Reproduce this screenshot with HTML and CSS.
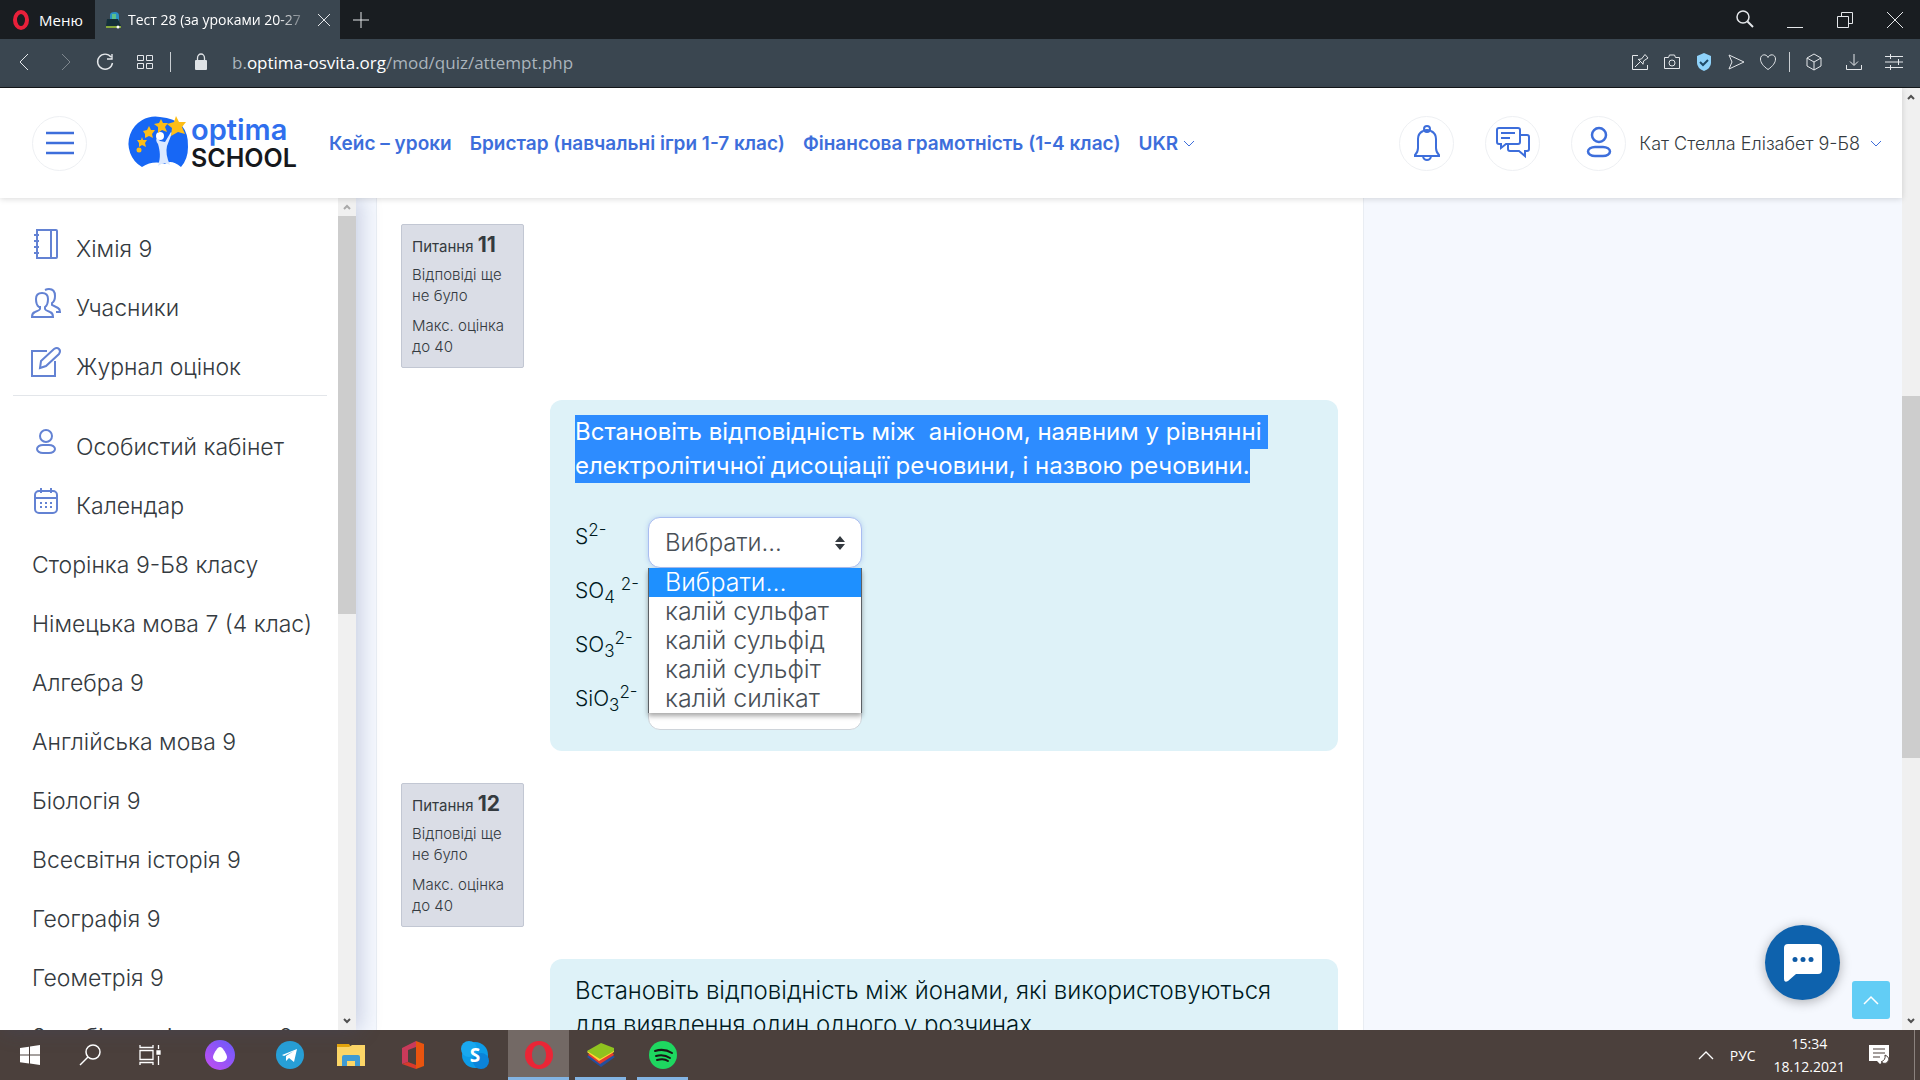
FILE: index.html
```html
<!DOCTYPE html>
<html lang="uk">
<head>
    <meta charset="UTF-8">
    <meta name="viewport" content="width=device-width, initial-scale=1.0">
    <title>Тест 28 (за уроками 20-27)</title>
    <link rel="stylesheet" href="styles.css">
</head>
<body>
    <!-- Browser tabs -->
    <div class="tabbar">
        <button class="menu-btn">
            <svg width="20" height="20" viewBox="0 0 20 20"><ellipse cx="10" cy="10" rx="6" ry="8" fill="none" stroke="#e8203a" stroke-width="4"/></svg>
            Меню
        </button>
        <div class="tab">
            <svg width="17" height="18" viewBox="0 0 17 18"><path d="M5 8V4q0-3 5-3 4 0 4 4v5H6z" fill="#2a8fc4"/><path d="M7 3h4v5H7z" fill="#5cc08a"/><path d="M2 8h11l3 7H1z" fill="#15303a"/><path d="M1 15h15v2H1z" fill="#87a93c"/><circle cx="13" cy="16" r="1.5" fill="#fff"/></svg>
            <span class="tab-title">Тест 28 (за уроками 20-27</span>
            <button class="icon-btn" aria-label="Закрити вкладку"><svg width="14" height="14" viewBox="0 0 14 14"><path d="M1 1l12 12M13 1L1 13"/></svg></button>
        </div>
        <button class="icon-btn new-tab" aria-label="Нова вкладка"><svg width="16" height="16" viewBox="0 0 16 16"><path d="M8 0v16M0 8h16"/></svg></button>
        <div class="window-btns">
            <button class="icon-btn" aria-label="Пошук"><svg width="20" height="20" viewBox="0 0 20 20"><circle cx="8" cy="7" r="6" stroke-width="1.500"/><path d="M12.500 11.500L18 17" stroke-width="2"/></svg></button>
            <button class="icon-btn" aria-label="Згорнути"><svg width="20" height="20" viewBox="0 0 20 20"><path d="M2 17.500h16"/></svg></button>
            <button class="icon-btn" aria-label="Розгорнути"><svg width="20" height="20" viewBox="0 0 20 20"><path d="M2.500 6.500h11v11h-11zM6.500 6V2.500h11v11H14"/></svg></button>
            <button class="icon-btn" aria-label="Закрити"><svg width="20" height="20" viewBox="0 0 20 20"><path d="M2 2l16 16M18 2L2 18"/></svg></button>
        </div>
    </div>

    <!-- Address bar -->
    <div class="toolbar">
        <div class="tool-left">
            <button class="icon-btn" aria-label="Назад"><svg width="20" height="20" viewBox="0 0 20 20"><path d="M13 2L5 10l8 8"/></svg></button>
            <button class="icon-btn dim" aria-label="Вперед"><svg width="20" height="20" viewBox="0 0 20 20"><path d="M7 2l8 8-8 8"/></svg></button>
            <button class="icon-btn" aria-label="Оновити"><svg width="20" height="20" viewBox="0 0 20 20"><path d="M16 5a7.500 7.500 0 1 0 1.500 6M17 2v5h-5" stroke-width="1.400"/></svg></button>
            <button class="icon-btn" aria-label="Експрес-панель"><svg width="20" height="20" viewBox="0 0 20 20"><path d="M2.500 3.500h6v5h-6zM11.500 3.500h6v5h-6zM2.500 11.500h6v5h-6zM11.500 11.500h6v5h-6z"/></svg></button>
        </div>
        <span class="sep"></span>
        <svg class="lock" width="14" height="18" viewBox="0 0 14 18"><path d="M3.500 8V5a3.500 4 0 0 1 7 0v3" fill="none" stroke="#dfe3e6" stroke-width="1.300"/><rect x="1" y="7" width="12" height="10" rx="1" fill="#dfe3e6"/></svg>
        <div class="url">b.<b>optima-osvita.org</b>/mod/quiz/attempt.php</div>
        <div class="tool-right">
            <button class="icon-btn" aria-label="Закріпити"><svg width="18" height="18" viewBox="0 0 18 18"><path d="M7 2.500H1.500v14h15V12M4 14l5-5M7 6l5 5M7 6.500l3.500-.5L14 1.500 17 5l-4.500 3-.5 3.500"/></svg></button>
            <button class="icon-btn" aria-label="Знімок"><svg width="18" height="18" viewBox="0 0 18 18"><path d="M1.500 4.500h4l1-2.500h5l1 2.500h4v11h-15z"/><circle cx="9" cy="10" r="3"/></svg></button>
            <button class="icon-btn" aria-label="Захист"><svg width="18" height="18" viewBox="0 0 18 18"><path d="M9 0l7 3v7q0 5-7 8-7-3-7-8V3z" fill="#8fd3fb" stroke="none"/><path d="M5 9l3 3 5-5" stroke="#1f4a66" stroke-width="2"/></svg></button>
            <button class="icon-btn" aria-label="Надіслати"><svg width="18" height="18" viewBox="0 0 18 18"><path d="M2 2l15 7-15 7 3-7z"/></svg></button>
            <button class="icon-btn" aria-label="Закладка"><svg width="18" height="18" viewBox="0 0 18 18"><path d="M9 16.500C4 13 1.500 9.500 1.500 6c0-5 6-5.500 7.500-1.500C10.500.500 16.500 1 16.500 6c0 3.500-2.500 7-7.500 10.500z"/></svg></button>
        </div>
        <span class="sep"></span>
        <div class="tool-end">
            <button class="icon-btn" aria-label="Розширення"><svg width="18" height="18" viewBox="0 0 18 18"><path d="M9 1l7 4v8l-7 4-7-4V5zM2 5l7 4 7-4M9 9v8"/></svg></button>
            <button class="icon-btn" aria-label="Завантаження"><svg width="18" height="18" viewBox="0 0 18 18"><path d="M9 1v11M5 8.500l4 4 4-4M1.500 12v4.500h15V12"/></svg></button>
            <button class="icon-btn" aria-label="Налаштування"><svg width="18" height="18" viewBox="0 0 18 18"><path d="M0 3.500h18M0 9h18M0 14.500h18M5.500 1v5M13.500 6v6M5.500 12v5"/></svg></button>
        </div>
    </div>

    <div class="page">
        <div class="site">
            <header class="header">
                <button class="round-btn" aria-label="Меню сайту"><svg width="28" height="24" viewBox="0 0 28 24" stroke-width="2.500"><path d="M0 2h28M0 12h28M0 22h28"/></svg></button>
                <a class="logo" href="#" aria-label="Optima School">
                    <svg width="168" height="54" viewBox="0 0 168 54">
                        <path d="M9 51A27 27 0 0 1 27 1q29 2 28 30 0 12-7 20-10-8-16-3Q20 44 9 51z" fill="#1767f5"/>
                        <path d="M25 50c3-9 2-15 0-22q-3-4-1-6l3 3 5 1 6-10 1 1-5 13q-2 8 3 19-6-4-12 1z" fill="#dce9ff"/><circle cx="27" cy="20" r="4" fill="#fff"/>
                        <g fill="#fdbd17"><path d="M43 0l3 6 7 0-4 5 3 7-7-2-7 4 1-8-5-4 7-2z"/><path d="M28 3l2 4 5 0-3 4 2 5-5-2-4 3 0-6-4-3 5-1z"/><path d="M16 10l2 4 4 0-3 4 1 4-4-2-4 2 0-4-2-3 4-1z"/><path d="M9 21l1 3 4 0-2 3 1 4-4-2-3 2 0-4-2-3 4 0z"/><circle cx="6" cy="34" r="2.500"/></g>
                        <text x="58" y="24" class="logo-top">optima</text>
                        <text x="58" y="51" class="logo-bottom">SCHOOL</text>
                    </svg>
                </a>
                <nav class="nav">
                    <a href="#">Кейс – уроки</a>
                    <a href="#">Бристар (навчальні ігри 1-7 клас)</a>
                    <a href="#">Фінансова грамотність (1-4 клас)</a>
                    <a href="#">UKR <svg width="12" height="7" viewBox="0 0 12 7"><path d="M1 1l5 5 5-5"/></svg></a>
                </nav>
                <div class="user-tools">
                    <button class="round-btn" aria-label="Сповіщення"><svg width="28" height="36" viewBox="0 0 28 36" stroke-width="2"><path d="M10 6a9 9 0 0 0-5 8v9q0 4-3 7v1h24v-1q-3-3-3-7v-9a9 9 0 0 0-5-8M10 32q1 3 4 3t4-3"/><circle cx="14" cy="4" r="3"/><path d="M10 6q4-2 8 0"/></svg></button>
                    <button class="round-btn" aria-label="Повідомлення"><svg width="34" height="34" viewBox="0 0 34 34" stroke-width="2"><path d="M3 2h19q2 0 2 2v12q0 2-2 2H10l-5 4v-4H3q-2 0-2-2V4q0-2 2-2zM5 7h14M5 12h9M24 9h7q2 0 2 2v12q0 2-2 2h-2v5l-6-5H14q-2 0-2-2v-5"/></svg></button>
                    <button class="round-btn" aria-label="Профіль"><svg width="26" height="32" viewBox="0 0 26 32" stroke-width="2.500"><ellipse cx="13" cy="8" rx="7" ry="7"/><rect x="2" y="20" width="22" height="9" rx="7"/></svg></button>
                    <a class="user-name" href="#">Кат Стелла Елізабет 9-Б8 <svg width="12" height="7" viewBox="0 0 12 7"><path d="M1 1l5 5 5-5"/></svg></a>
                </div>
            </header>

            <div class="content">
                <aside class="sidebar">
                    <nav class="side-nav">
                        <a href="#"><svg width="30" height="30" viewBox="0 0 30 30"><path d="M6 1h19q1 0 1 1v26q0 1-1 1H6zM20 1v28M3 6h5M3 12h5M3 18h5M3 24h5"/></svg>Хімія 9</a>
                        <a href="#"><svg width="30" height="30" viewBox="0 0 30 30"><path d="M8 19q-3-2-3-8 0-6 6-6t6 6q0 6-3 8v2q0 1 5 3 3 1 3 5H1q0-4 3-5 5-2 5-3v-2zM14 2q2-1 4-1 6 0 6 7 0 5-3 7v2l6 3q2 1 2 4h-4"/></svg>Учасники</a>
                        <a href="#"><svg width="30" height="30" viewBox="0 0 30 30"><path d="M16 4H1v25h23V14M9 21l1-7L23 2q3-2 5 0t0 5L15 19z"/></svg>Журнал оцінок</a>
                        <hr>
                        <a href="#"><svg width="30" height="30" viewBox="0 0 30 30"><circle cx="15" cy="9" r="6"/><rect x="6" y="18" width="18" height="8" rx="6"/></svg>Особистий кабінет</a>
                        <a href="#"><svg width="30" height="30" viewBox="0 0 30 30"><rect x="4" y="5" width="22" height="22" rx="4"/><path d="M4 12h22M10 2v5M20 2v5"/><path d="M9 17h2M14 17h2M19 17h2M9 21h2M14 21h2M19 21h2"/></svg>Календар</a>
                        <a href="#">Сторінка 9-Б8 класу</a>
                        <a href="#">Німецька мова 7 (4 клас)</a>
                        <a href="#">Алгебра 9</a>
                        <a href="#">Англійська мова 9</a>
                        <a href="#">Біологія 9</a>
                        <a href="#">Всесвітня історія 9</a>
                        <a href="#">Географія 9</a>
                        <a href="#">Геометрія 9</a>
                        <a href="#">Зарубіжна література 9</a>
                    </nav>
                    <div class="scrollbar side-scroll">
                        <svg width="8" height="6" viewBox="0 0 8 6"><path d="M1 5l3-3 3 3"/></svg>
                        <div class="track"><div class="thumb"></div></div>
                        <svg width="8" height="6" viewBox="0 0 8 6"><path d="M1 1l3 3 3-3"/></svg>
                    </div>
                </aside>

                <main class="quiz">
                    <section class="question">
                        <div class="info">
                            <h3>Питання <span>11</span></h3>
                            <p>Відповіді ще не було</p>
                            <p>Макс. оцінка до 40</p>
                        </div>
                        <div class="formulation">
                            <p class="qtext"><mark>Встановіть відповідність між&nbsp; аніоном, наявним у рівнянні&nbsp;</mark><mark>електролітичної дисоціації речовини, і назвою речовини.</mark></p>
                            <table class="answers">
                                <tr>
                                    <td class="text"><label for="a1">S<sup>2-</sup></label></td>
                                    <td class="control">
                                        <select id="a1" class="active"><option>Вибрати...</option></select>
                                        <ul class="options">
                                            <li class="selected">Вибрати...</li>
                                            <li>калій сульфат</li>
                                            <li>калій сульфід</li>
                                            <li>калій сульфіт</li>
                                            <li>калій силікат</li>
                                        </ul>
                                    </td>
                                </tr>
                                <tr>
                                    <td class="text"><label for="a2">SO<sub>4</sub> <sup>2-</sup></label></td>
                                    <td class="control"><select id="a2"><option></option></select></td>
                                </tr>
                                <tr>
                                    <td class="text"><label for="a3">SO<sub>3</sub><sup>2-</sup></label></td>
                                    <td class="control"><select id="a3"><option></option></select></td>
                                </tr>
                                <tr>
                                    <td class="text"><label for="a4">SiO<sub>3</sub><sup>2-</sup></label></td>
                                    <td class="control"><select id="a4"><option></option></select></td>
                                </tr>
                            </table>
                        </div>
                    </section>

                    <section class="question">
                        <div class="info">
                            <h3>Питання <span>12</span></h3>
                            <p>Відповіді ще не було</p>
                            <p>Макс. оцінка до 40</p>
                        </div>
                        <div class="formulation">
                            <p class="qtext">Встановіть відповідність між йонами, які використовуються для виявлення один одного у розчинах.</p>
                        </div>
                    </section>
                </main>
                <div class="blocks"></div>
            </div>

            <button class="chat-btn" aria-label="Чат"><svg width="38" height="38" viewBox="0 0 38 38"><path d="M4 0h30q4 0 4 4v22q0 4-4 4H12l-8 7q-4 2-4-2V4q0-4 4-4z" fill="#fff"/><g fill="#0e5ba6"><circle cx="11" cy="15.500" r="2.500"/><circle cx="19" cy="15.500" r="2.500"/><circle cx="27" cy="15.500" r="2.500"/></g></svg></button>
            <button class="top-btn" aria-label="Вгору"><svg width="16" height="9" viewBox="0 0 16 9"><path d="M1 8l7-7 7 7" fill="none" stroke="#fff" stroke-width="1.500"/></svg></button>
        </div>
        <div class="scrollbar page-scroll">
            <svg width="8" height="6" viewBox="0 0 8 6"><path d="M1 5l3-3 3 3"/></svg>
            <div class="track"><div class="thumb"></div></div>
            <svg width="8" height="6" viewBox="0 0 8 6"><path d="M1 1l3 3 3-3"/></svg>
        </div>
    </div>

    <!-- Windows taskbar -->
    <footer class="taskbar">
        <button aria-label="Пуск"><svg width="20" height="20" viewBox="0 0 20 20" fill="#fff"><path d="M0 3l9-1.300V9.500H0zM10 1.500L20 0v9.500H10zM0 10.500h9v8L0 17.200zM10 10.500h10V20l-10-1.500z"/></svg></button>
        <button aria-label="Пошук"><svg width="22" height="22" viewBox="0 0 22 22" fill="none" stroke="#fff" stroke-width="1.500"><circle cx="14" cy="8" r="7"/><path d="M9 13l-8 8"/></svg></button>
        <button aria-label="Подання завдань"><svg width="22" height="20" viewBox="0 0 22 20" fill="none" stroke="#fff" stroke-width="1.300"><path d="M1 5.500h13v9H1zM1 0v2.500h13V0M1 20v-2.500h13V20M19.500 0v4M19.500 11v9"/><path d="M18 6h3v3h-3z" fill="#fff"/></svg></button>
        <button class="wide" aria-label="Аліса"><svg width="30" height="30" viewBox="0 0 30 30"><defs><linearGradient id="al" x1="0" y1="1" x2="1" y2="0"><stop offset="0" stop-color="#c44df0"/><stop offset="1" stop-color="#6a5cff"/></linearGradient></defs><circle cx="15" cy="15" r="15" fill="url(#al)"/><path d="M15 7c3 0 7 8 7 10 0 3-3 5-7 5s-7-2-7-5c0-2 4-10 7-10z" fill="#fff"/></svg></button>
        <button aria-label="Telegram"><svg width="28" height="28" viewBox="0 0 28 28"><circle cx="14" cy="14" r="14" fill="#279fd6"/><path d="M6 14l15-6-3 13-5-4-3 3 0-5 8-5-10 5z" fill="#fff"/></svg></button>
        <button class="app" aria-label="Провідник"><svg width="28" height="24" viewBox="0 0 28 24"><path d="M0 1h12l2 3H0z" fill="#e5a50c"/><path d="M0 4h12l3-2h13v21H0z" fill="#fcd667"/><path d="M5 23v-9q0-2 2-2h14q2 0 2 2v9h-5v-5h-8v5z" fill="#3f9bd4"/></svg></button>
        <button class="app" aria-label="Office"><svg width="24" height="28" viewBox="0 0 24 28"><path d="M1 7L15 0v6L7 9v12l-6 2z" fill="#c93a5a"/><path d="M15 0l8 3v22l-8 3z" fill="#e8540f"/><path d="M1 23l6-2 8 3v4z" fill="#d83a2c"/></svg></button>
        <button class="app" aria-label="Skype"><svg width="28" height="28" viewBox="0 0 28 28"><circle cx="14" cy="14" r="13" fill="#0c9ce8"/><circle cx="8" cy="8" r="8" fill="#19a8ef"/><circle cx="20" cy="20" r="8" fill="#0b83d9"/><text x="14" y="21" class="skype-s">S</text></svg></button>
        <button class="open active" aria-label="Opera"><svg width="30" height="30" viewBox="0 0 30 30"><path fill-rule="evenodd" d="M15 1a14 14 0 1 0 0 28 14 14 0 1 0 0-28zm0 4c4 0 7 4 7 10s-3 10-7 10S8 21 8 15s3-10 7-10z" fill="#ea2536"/></svg></button>
        <button class="open" aria-label="BlueStacks"><svg width="28" height="24" viewBox="0 0 28 24"><path d="M0 14l14 10 14-10-3-2-11 8-12-8z" fill="#234f9e"/><path d="M1 12l12 9 14-9-2-3H3z" fill="#e23b2e"/><path d="M0 9l12 9 15-9V7H2z" fill="#ffd633"/><path d="M0 8L14 0l13 5v3l-14 8z" fill="#8fc31f"/></svg></button>
        <button class="open" aria-label="Spotify"><svg width="28" height="28" viewBox="0 0 28 28"><circle cx="14" cy="14" r="14" fill="#1ed760"/><path d="M6 10q9-3 17 2M7 15q8-2 14 2M8 19q7-2 11 1" fill="none" stroke="#191414" stroke-width="2" stroke-linecap="round"/></svg></button>
        <div class="tray">
            <svg width="16" height="9" viewBox="0 0 16 9" fill="none" stroke="#fff" stroke-width="1.300"><path d="M1 8l7-7 7 7"/></svg>
            <span class="lang">РУС</span>
            <div class="clock"><span>15:34</span><span>18.12.2021</span></div>
            <svg class="notes" width="20" height="20" viewBox="0 0 20 20"><path d="M0 0h20v16h-5l-4 3-3-3H0z" fill="#fff"/><path d="M4 4h12M4 8h12M4 12h7" stroke="#4a3f3b" stroke-width="1.200"/><path d="M16 10q1 5-4 7 6 4 8-3-1-3-4-4z" fill="#fff" stroke="#4a3f3b"/></svg>
            <span class="peek"></span>
        </div>
    </footer>
</body>
</html>
```
FILE: styles.css
```css
* {
    box-sizing: border-box;
}
body {
    margin: 0;
    height: 100vh;
    display: flex;
    flex-direction: column;
    overflow: hidden;
    font-family: Inter, "Open Sans", sans-serif;
    font-weight: 300;
    color: #343a40;
}
button {
    font: inherit;
    color: inherit;
    background: none;
    border: none;
    padding: 0;
    cursor: pointer;
}
a {
    color: inherit;
    text-decoration: none;
}
svg {
    display: block;
    flex: none;
    overflow: visible;
}

/* browser */
.tabbar, .toolbar, .taskbar {
    flex: none;
    display: flex;
    align-items: center;
    font-family: "Open Sans", "Noto Sans", sans-serif;
    font-weight: 400;
}
.tabbar {
    height: 39px;
    background: #191d21;
    color: #fff;
    font-size: 15px;
}
.menu-btn {
    display: flex;
    align-items: center;
    gap: 8px;
    width: 95px;
    padding-left: 11px;
}
.tab {
    display: flex;
    align-items: center;
    gap: 6px;
    width: 245px;
    height: 39px;
    padding: 0 9px 0 10px;
    background: #3a4650;
    font-size: 14px;
}
.tab-title {
    flex: 1;
    overflow: hidden;
    white-space: nowrap;
    mask-image: linear-gradient(to right, #000 82%, transparent);
}
.icon-btn svg {
    fill: none;
    stroke: #e4e7ea;
    stroke-width: 1;
}
.new-tab {
    margin-left: 13px;
}
.window-btns {
    display: flex;
    gap: 30px;
    margin-left: auto;
    padding-right: 15px;
}
.toolbar {
    height: 49px;
    background: #3a4650;
    border-bottom: 1px solid #14181b;
    padding: 0 17px 2px 15px;
}
.tool-left {
    display: flex;
    gap: 20px;
}
.dim {
    opacity: 0.4;
}
.sep {
    width: 1px;
    height: 20px;
    margin: 0 15px;
    background: #c9ced2;
}
.lock {
    margin: 0 24px 0 8px;
}
.url {
    flex: 1;
    font-size: 17px;
    color: #aab4bc;
}
.url b {
    font-weight: 400;
    color: #fff;
}
.tool-right {
    display: flex;
    gap: 14px;
}
.tool-right + .sep {
    margin: 0 15px 0 12px;
}
.tool-end {
    display: flex;
    gap: 22px;
}

/* scrollbars */
.page {
    flex: 1;
    min-height: 0;
    display: flex;
}
.scrollbar {
    flex: none;
    width: 18px;
    padding: 6px 0;
    display: flex;
    flex-direction: column;
    align-items: center;
    background: #f0f0f0;
}
.scrollbar svg {
    fill: none;
    stroke: #505050;
    stroke-width: 2;
}
.track {
    flex: 1;
    width: 100%;
    margin: 6px 0;
}
.thumb {
    background: #cdcdcd;
}
.side-scroll .thumb {
    height: 50%;
}
.side-scroll svg:first-child {
    stroke: #a9a9a9;
}
.page-scroll .thumb {
    height: 40%;
    margin-top: 290px;
}

/* header */
.site {
    position: relative;
    flex: 1;
    min-width: 0;
    display: flex;
    flex-direction: column;
    background: #f5f8fe;
}
.header {
    z-index: 2;
    flex: none;
    height: 110px;
    display: flex;
    align-items: center;
    padding: 0 20px 0 32px;
    background: #fff;
    box-shadow: 0 1px 6px rgba(0,0,0,0.15);
}
.round-btn {
    width: 55px;
    height: 55px;
    display: flex;
    align-items: center;
    justify-content: center;
    border: 1px solid #eef0f3;
    border-radius: 50%;
}
.header svg {
    fill: none;
    stroke: #3d6edb;
}
.header .logo svg {
    stroke: none;
}
.logo {
    margin: 0 28px 0 46px;
}
.logo-top, .logo-bottom {
    font-family: Inter, sans-serif;
    font-weight: 600;
    font-size: 29px;
    fill: #2f6fee;
}
.logo-bottom {
    font-size: 25px;
    fill: #16181c;
}
.nav {
    display: flex;
    gap: 18px;
    font-size: 19px;
    font-weight: 600;
    color: #3d6edb;
    white-space: nowrap;
}
.nav a, .user-name {
    display: flex;
    align-items: center;
    gap: 5px;
}
.user-tools {
    display: flex;
    align-items: center;
    gap: 31px;
    margin-left: auto;
}
.user-name {
    gap: 10px;
    margin-left: -18px;
    font-size: 18px;
    white-space: nowrap;
}

/* content */
.content {
    flex: 1;
    min-height: 0;
    display: flex;
}
.sidebar {
    z-index: 1;
    flex: none;
    width: 356px;
    display: flex;
    background: #fff;
    box-shadow: 4px 0 20px rgba(60,80,140,0.25);
}
.side-nav {
    flex: 1;
    overflow: hidden;
    padding-top: 20px;
}
.side-nav a {
    display: flex;
    align-items: center;
    gap: 15px;
    height: 59px;
    padding: 2px 0 0 32px;
    font-size: 23px;
    white-space: nowrap;
}
.side-nav svg {
    margin: 0 0 10px -1px;
    fill: none;
    stroke: #6382d3;
    stroke-width: 2;
}
.side-nav hr {
    margin: 0 11px 20px 13px;
    border: none;
    border-top: 1px solid #e3e6ea;
}
.quiz {
    flex: 1;
    min-width: 0;
    overflow: hidden;
    margin-left: 20px;
    padding: 26px 25px 0 24px;
    background: #fff;
    border: 1px solid #e9edf3;
    border-width: 0 1px;
}
.blocks {
    flex: none;
    width: 538px;
}
.question {
    display: grid;
    grid-template-columns: 123px 1fr;
    gap: 32px 26px;
    margin-bottom: 32px;
}
.info {
    height: 144px;
    padding: 5px 10px;
    background: #dadde6;
    border: 1px solid #c2c7d3;
    border-radius: 2px;
    font-size: 15px;
    line-height: 21px;
}
.info h3 {
    margin: 0 0 3px;
    font-size: 15px;
    font-weight: 400;
    line-height: 29px;
}
.info span {
    font-size: 21px;
    font-weight: 700;
}
.info p {
    margin: 0 0 9px;
}
/* the question text sits below its info box */
.formulation {
    grid-row: 2;
    grid-column: 2;
    padding: 15px 25px 18px;
    background: #def2f8;
    border-radius: 12px;
    color: #001a1e;
    font-size: 24px;
}
.qtext {
    margin: 0 0 34px;
    line-height: 34px;
}
.qtext mark {
    display: block;
    width: fit-content;
    background: #2d8cff;
    color: #fff;
    font-weight: 400;
}
.answers {
    border-collapse: collapse;
}
.answers td {
    height: 54px;
    padding: 0;
    vertical-align: top;
}
.answers .text {
    width: 73px;
    padding-top: 6px;
    line-height: 27px;
    font-size: 21px;
    white-space: nowrap;
}
sup, sub {
    font-size: 17px;
    line-height: 0;
}
.control {
    position: relative;
}
select {
    display: block;
    width: 214px;
    height: 51px;
    padding: 0 16px;
    appearance: none;
    background: #fff;
    border: 1px solid #ced4da;
    border-radius: 12px;
    font: inherit;
    color: #495057;
}
select.active {
    border-color: #a9bdf0;
    box-shadow: 0 0 5px rgba(90,130,230,0.3);
    background: #fff url("data:image/svg+xml,%3Csvg xmlns='http://www.w3.org/2000/svg' viewBox='0 0 10 14'%3E%3Cpath d='M5 0L0 6h10zM5 14L0 8h10z' fill='%23343a40'/%3E%3C/svg%3E") no-repeat right 16px center / 10px 14px;
}
.options {
    position: absolute;
    z-index: 1;
    top: 51px;
    left: 0;
    width: 214px;
    margin: 0;
    padding: 0;
    list-style: none;
    background: #fff;
    border: 1px solid #5d6166;
    border-width: 0 1px;
    box-shadow: 0 3px 5px rgba(0,0,0,0.35);
    color: #495057;
    font-size: 25px;
    line-height: 29px;
}
.options li {
    padding-left: 16px;
}
.options .selected {
    background: #1e90ff;
    color: #fff;
}

/* floating buttons */
.chat-btn, .top-btn {
    position: absolute;
    z-index: 3;
    display: flex;
    align-items: center;
    justify-content: center;
}
.chat-btn {
    right: 62px;
    bottom: 30px;
    width: 75px;
    height: 75px;
    background: #0e62ad;
    border-radius: 50%;
    box-shadow: 0 2px 12px rgba(0,0,0,0.3);
}
.top-btn {
    right: 12px;
    bottom: 11px;
    width: 38px;
    height: 38px;
    background: #62cdf5;
    border-radius: 3px;
}

/* taskbar */
.taskbar {
    height: 50px;
    background: #4b403c;
    color: #fff;
}
.taskbar button {
    width: 60px;
    height: 50px;
    display: flex;
    align-items: center;
    justify-content: center;
}
.taskbar .wide {
    width: 80px;
}
.taskbar .app {
    width: 62px;
}
.taskbar .open {
    width: 51px;
    margin-right: 11px;
    border-bottom: 3px solid #83b4e3;
    padding-top: 3px;
}
.taskbar .open.active {
    width: 61px;
    margin: 0 6px 0 2px;
    background: #736965;
}
.skype-s {
    font-family: "Open Sans", sans-serif;
    font-size: 19px;
    font-weight: 700;
    fill: #fff;
    text-anchor: middle;
}
.tray {
    display: flex;
    align-items: center;
    margin-left: auto;
    font-size: 14px;
}
.lang {
    margin: 0 18px 0 16px;
}
.clock {
    display: flex;
    flex-direction: column;
    align-items: center;
    line-height: 23px;
}
.notes {
    margin: 0 25px 0 24px;
}
.peek {
    width: 6px;
    height: 50px;
    border-left: 1px solid #8b827e;
}
```
